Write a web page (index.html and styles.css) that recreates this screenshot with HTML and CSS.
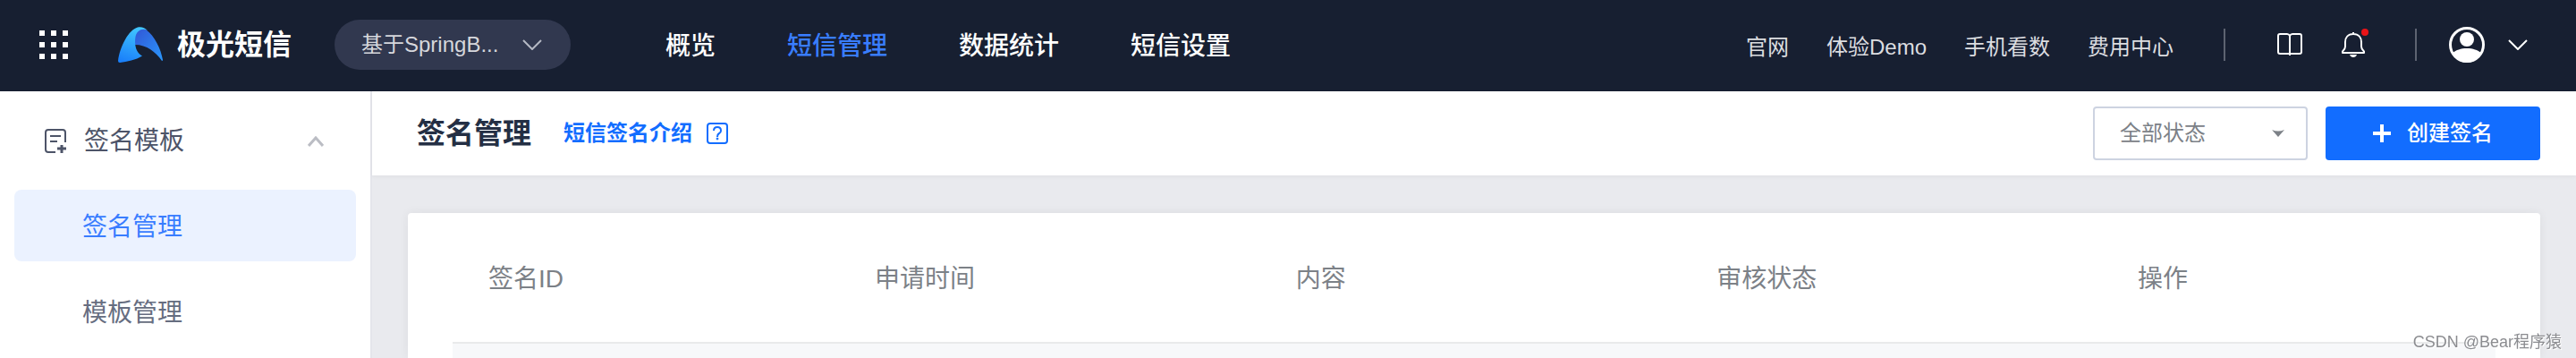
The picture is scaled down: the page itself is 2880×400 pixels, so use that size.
FILE: index.html
```html
<!DOCTYPE html>
<html lang="zh-CN">
<head>
    <meta charset="UTF-8">
    <meta name="viewport" content="width=device-width, initial-scale=1.0">
    <title>签名管理 - 极光短信</title>
    <link rel="stylesheet" href="styles.css">
</head>
<body>
    <header class="topbar">
        <button type="button" class="apps" aria-label="全部产品">
            <svg width="32" height="32" viewBox="0 0 32 32" fill="#fff">
                <path d="M0 0h6v6H0zM13 0h6v6h-6zM26 0h6v6h-6zM0 13h6v6H0zM13 13h6v6h-6zM26 13h6v6h-6zM0 26h6v6H0zM13 26h6v6h-6zM26 26h6v6h-6z"/>
            </svg>
        </button>
        <a href="#" class="logo">
            <svg width="50" height="40" viewBox="0 0 50 40">
                <defs>
                    <linearGradient id="logo-left" x1="0.6" y1="0" x2="0.3" y2="1">
                        <stop offset="0" stop-color="#41c6fe"/>
                        <stop offset="1" stop-color="#1a80fa"/>
                    </linearGradient>
                    <linearGradient id="logo-right" x1="0" y1="0.1" x2="1" y2="1">
                        <stop offset="0" stop-color="#3158d6"/>
                        <stop offset="1" stop-color="#2a97fd"/>
                    </linearGradient>
                </defs>
                <path d="M19 5C22 1 27 0 31 3C41 10 48 25 50 37Q50 38 49 38C42 28 32 20 19 20Z" fill="url(#logo-right)"/>
                <path d="M0 38C2 22 12 3 22 0.5C26 -0.5 30 1 33 4C27 1 21 4 19.500 11C18 20 20 29 27 32.500C20 37 10 39 2 40Q0 40 0 38Z" fill="url(#logo-left)"/>
            </svg>
            <span>极光短信</span>
        </a>
        <button type="button" class="app-select">
            <span>基于SpringB...</span>
            <svg width="22" height="12" viewBox="0 0 22 12" fill="none" stroke="#b5b9c4" stroke-width="2">
                <path d="M1 1l10 10L21 1"/>
            </svg>
        </button>
        <nav class="main-nav">
            <a href="#">概览</a>
            <a href="#" class="active">短信管理</a>
            <a href="#">数据统计</a>
            <a href="#">短信设置</a>
        </nav>
        <nav class="side-nav">
            <a href="#">官网</a>
            <a href="#">体验Demo</a>
            <a href="#">手机看数</a>
            <a href="#">费用中心</a>
        </nav>
        <div class="tools">
            <button type="button" aria-label="文档">
                <svg width="28" height="28" viewBox="0 0 28 28" fill="none" stroke="#fff" stroke-width="2">
                    <path d="M14 4Q13 2 11 2H3Q1 2 1 4V22Q1 24 3 24H25Q27 24 27 22V4Q27 2 25 2H17Q15 2 14 4V26"/>
                </svg>
            </button>
            <button type="button" class="bell" aria-label="消息">
                <svg width="26" height="28" viewBox="0 0 26 28" fill="none" stroke="#fff" stroke-width="2" stroke-linejoin="round">
                    <path d="M13 0v2M13 2C7 2 4 6 4 11V16Q4 19 1 21.500V23H25V21.500Q22 19 22 16V11C22 6 19 2 13 2Z"/>
                    <path d="M9 25h8q-1 3-4 3t-4-3z" fill="#fff" stroke="none"/>
                </svg>
                <span class="dot"></span>
            </button>
        </div>
        <button type="button" class="account" aria-label="账户">
            <svg width="40" height="40" viewBox="0 0 40 40">
                <circle cx="20" cy="20" r="18.500" fill="none" stroke="#fff" stroke-width="3"/>
                <circle cx="20" cy="14" r="8" fill="#fff"/>
                <path d="M4 29C8 26 13 24 20 24S32 26 36 29C33 35 27 40 20 40S7 35 4 29Z" fill="#fff"/>
            </svg>
            <svg width="22" height="12" viewBox="0 0 22 12" fill="none" stroke="#fff" stroke-width="2">
                <path d="M1 1l10 10L21 1"/>
            </svg>
        </button>
    </header>

    <div class="layout">
        <aside class="sidebar">
            <button type="button" class="group">
                <svg width="26" height="28" viewBox="0 0 26 28" fill="none" stroke="#4d5468" stroke-width="2">
                    <path d="M12 26H4Q1 26 1 23V4Q1 1 4 1H20Q23 1 23 4V15M6 8h12M6 14h8"/>
                    <path d="M19 18v9M14 22h10" stroke-width="3"/>
                </svg>
                <span>签名模板</span>
                <svg class="caret" width="18" height="12" viewBox="0 0 18 12" fill="none" stroke="#bbbdc4" stroke-width="3">
                    <path d="M1 11l8-9 8 9"/>
                </svg>
            </button>
            <a href="#" class="item active">签名管理</a>
            <a href="#" class="item">模板管理</a>
        </aside>

        <main class="content">
            <div class="page-head">
                <h1>签名管理</h1>
                <a href="#" class="intro">
                    <span>短信签名介绍</span>
                    <svg width="24" height="24" viewBox="0 0 24 24" fill="none" stroke="#126dff" stroke-width="2">
                        <rect x="1" y="1" width="22" height="22" rx="3"/>
                        <path d="M8 9Q8 5 12 5T16 9Q16 11 14 12T12 16"/>
                        <circle cx="12" cy="18" r="1" fill="#126dff" stroke-width="1"/>
                    </svg>
                </a>
                <div class="status">
                    <select aria-label="状态">
                        <option>全部状态</option>
                    </select>
                    <svg width="14" height="8" viewBox="0 0 14 8" fill="#7c8187">
                        <path d="M0 0Q7 3 14 0L7 8Z"/>
                    </svg>
                </div>
                <button type="button" class="create">
                    <svg width="20" height="20" viewBox="0 0 20 20" fill="#fff">
                        <path d="M8 0h4v8h8v4h-8v8H8v-8H0V8h8z"/>
                    </svg>
                    <span>创建签名</span>
                </button>
            </div>

            <div class="card">
                <table>
                    <thead>
                        <tr>
                            <th class="col-id">签名ID</th>
                            <th>申请时间</th>
                            <th>内容</th>
                            <th>审核状态</th>
                            <th class="col-action">操作</th>
                        </tr>
                    </thead>
                    <tbody>
                        <tr>
                            <td colspan="5"></td>
                        </tr>
                    </tbody>
                </table>
            </div>
        </main>
    </div>
    <div class="watermark">CSDN @Bear程序猿</div>
</body>
</html>
```
FILE: styles.css
```css
* {
    box-sizing: border-box;
}
body {
    margin: 0;
    font-family: "Liberation Sans", "Noto Sans CJK SC", sans-serif;
    font-size: 28px;
    line-height: 40px;
    color: #7c8187;
    background: #e9eaee;
    display: flex;
    flex-direction: column;
    min-height: 100vh;
}
a {
    text-decoration: none;
    color: inherit;
}
button {
    padding: 0;
    border: none;
    background: none;
    font: inherit;
    color: inherit;
    cursor: pointer;
}
svg {
    display: block;
    flex: none;
}

/* top bar */
.topbar {
    display: flex;
    align-items: center;
    height: 102px;
    padding: 0 54px 2px 44px;
    background: #171f31;
    color: #fff;
    white-space: nowrap;
}
.logo {
    display: flex;
    align-items: center;
    gap: 16px;
    margin-left: 56px;
    font-size: 32px;
    font-weight: bold;
}
.app-select {
    display: flex;
    align-items: center;
    justify-content: space-between;
    width: 264px;
    height: 56px;
    margin-left: 48px;
    padding: 0 32px 0 30px;
    border-radius: 28px;
    background: #31384f;
    color: #d6d7dc;
    font-size: 24px;
}
.main-nav {
    display: flex;
    gap: 80px;
    margin-left: 106px;
    padding-top: 4px;
    font-weight: 500;
}
.main-nav .active {
    color: #397dff;
}
.side-nav {
    display: flex;
    gap: 42px;
    margin-left: auto;
    padding-top: 6px;
    font-size: 24px;
    color: #dcdde0;
}
.tools {
    display: flex;
    align-items: center;
    gap: 44px;
    height: 36px;
    margin-left: 56px;
    padding: 0 56px 0 58px;
    border-left: 2px solid #5d6371;
    border-right: 2px solid #5d6371;
}
.bell {
    position: relative;
}
.dot {
    position: absolute;
    top: -4px;
    right: -4px;
    width: 8px;
    height: 8px;
    border-radius: 50%;
    background: #e91418;
}
.account {
    display: flex;
    align-items: center;
    gap: 26px;
    margin-left: 36px;
}

/* sidebar */
.layout {
    display: flex;
    flex: 1;
}
.sidebar {
    display: flex;
    flex-direction: column;
    flex: none;
    gap: 16px;
    width: 416px;
    padding: 14px 16px 12px;
    border-right: 2px solid #e4e5eb;
    background: #fff;
}
.group {
    display: flex;
    align-items: center;
    height: 80px;
    padding: 4px 36px 0 34px;
    gap: 18px;
    color: #4d5468;
}
.caret {
    margin-left: auto;
}
.item {
    height: 80px;
    padding: 2px 0 0 76px;
    border-radius: 8px;
    line-height: 80px;
    color: #666d80;
}
.item.active {
    background: #ebf2ff;
    color: #397dff;
}

/* content */
.content {
    display: flex;
    flex-direction: column;
    flex: 1;
    min-width: 0;
}
.page-head {
    display: flex;
    align-items: center;
    height: 94px;
    padding: 0 40px 0 50px;
    background: #fff;
    box-shadow: 0 2px 4px rgba(0, 0, 0, 0.04);
}
h1 {
    margin: 0;
    font-size: 32px;
    color: #242f44;
}
.intro {
    display: flex;
    align-items: center;
    gap: 16px;
    margin-left: 36px;
    font-size: 24px;
    font-weight: bold;
    color: #126dff;
}
.status {
    position: relative;
    width: 240px;
    margin-left: auto;
}
.status select {
    appearance: none;
    width: 100%;
    height: 60px;
    padding: 0 28px;
    border: 2px solid #cdd3e1;
    border-radius: 4px;
    background: #fff;
    font: inherit;
    font-size: 24px;
    color: #7c8187;
}
.status svg {
    position: absolute;
    top: 26px;
    right: 26px;
    pointer-events: none;
}
.create {
    display: flex;
    align-items: center;
    justify-content: center;
    gap: 18px;
    width: 240px;
    height: 60px;
    margin-left: 20px;
    border-radius: 4px;
    background: #126dff;
    color: #fff;
    font-size: 24px;
    font-weight: 500;
}
.card {
    flex: 1;
    margin: 42px 40px 0;
    padding: 0 50px;
    border-radius: 4px 4px 0 0;
    background: #fff;
    box-shadow: 0 0 12px rgba(0, 0, 0, 0.06);
}
table {
    width: 100%;
    table-layout: fixed;
    border-spacing: 0;
}
th {
    height: 146px;
    padding: 4px 0 0 40px;
    border-bottom: 2px solid #e9eaeb;
    font-weight: normal;
    text-align: left;
}
.col-id {
    width: 432px;
}
.col-action {
    width: 440px;
}
td {
    height: 16px;
    padding: 0;
    background: #f7f8fa;
}
.watermark {
    position: fixed;
    right: 16px;
    bottom: 6px;
    font-size: 18px;
    line-height: 24px;
    color: #8b8c90;
    text-shadow: 1px 1px 0 #fff;
}
```
